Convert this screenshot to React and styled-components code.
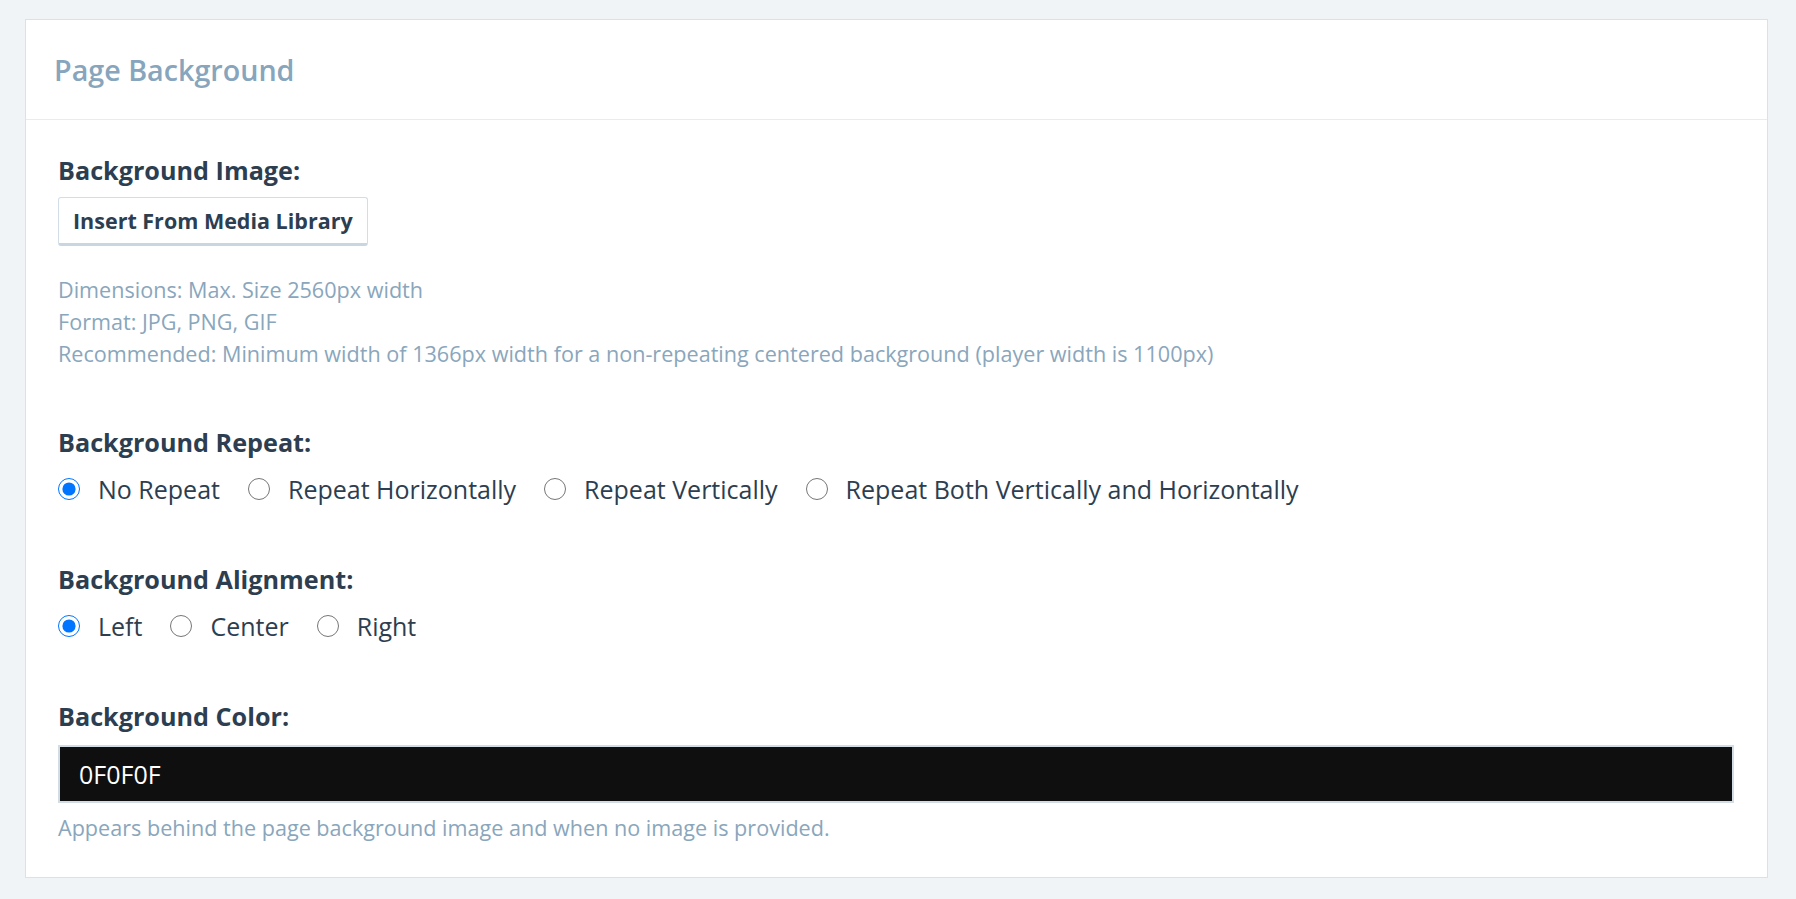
import styled, { createGlobalStyle } from 'styled-components';

const GlobalStyle = createGlobalStyle`
  body {
    margin: 0;
    background: #f1f4f7;
    font-family: "Open Sans", "Noto Sans", sans-serif;
    color: #2c3e50;
  }
`;

const Page = styled.div`
  padding: 19px 28px 21px 25px;
`;

const Card = styled.section`
  background: #fff;
  border: 1px solid #dde1e5;
`;

const CardHeader = styled.header`
  display: flex;
  align-items: center;
  height: 99px;
  padding-left: 28px;
  border-bottom: 1px solid #e8ecef;
`;

const Title = styled.h2`
  margin: 0;
  font-size: 28.7px;
  font-weight: 600;
  color: #87a5bc;
`;

const CardBody = styled.div`
  padding: 35px 33px 33px 32px;
`;

const Group = styled.div`
  margin-bottom: ${p => p.$last ? 0 : '57px'};
`;

const Label = styled.div`
  font-size: 25.2px;
  line-height: 30px;
  font-weight: 700;
  color: #2c3e50;
`;

const MediaButton = styled.button`
  margin-top: 12px;
  height: 49px;
  padding: 0 14px 0 14px;
  background: #fff;
  border: 1px solid #d3dde6;
  border-bottom: 3px solid #c9d6e2;
  border-radius: 3px;
  font-family: inherit;
  font-size: 21.5px;
  font-weight: 700;
  color: #2c3e50;
`;

const Help = styled.div`
  margin-top: ${p => p.$top || '0px'};
  font-size: 21.6px;
  line-height: 32px;
  color: #89a6bc;
`;

const RadioRow = styled.div`
  display: flex;
  align-items: center;
  gap: 28px;
  margin-top: 14px;
  height: 36px;
`;

const Option = styled.label`
  display: flex;
  align-items: center;
  gap: 18px;
  font-size: 25px;
  color: #2c3e50;
`;

const Radio = styled.input.attrs({ type: 'radio' })`
  width: 22px;
  height: 22px;
  margin: 0;
  accent-color: #0075ff;
`;

const ColorInput = styled.input`
  display: block;
  box-sizing: border-box;
  width: 100%;
  height: 58px;
  margin-top: 14px;
  padding: 0 19px;
  background: #0f0f0f;
  border: 2px solid #d2dce5;
  font-family: inherit;
  font-size: 25px;
  color: #fff;
  outline: none;
`;

function RadioGroup({ name, options, value }) {
  return (
    <RadioRow>
      {options.map(o => (
        <Option key={o}>
          <Radio name={name} defaultChecked={o === value} />
          {o}
        </Option>
      ))}
    </RadioRow>
  );
}

export default function App() {
  return (
    <>
      <GlobalStyle />
      <Page>
        <Card>
          <CardHeader>
            <Title>Page Background</Title>
          </CardHeader>
          <CardBody>
            <Group>
              <Label>Background Image:</Label>
              <MediaButton>Insert From Media Library</MediaButton>
              <Help $top="28px">
                Dimensions: Max. Size 2560px width<br />
                Format: JPG, PNG, GIF<br />
                Recommended: Minimum width of 1366px width for a non-repeating centered background (player width is 1100px)
              </Help>
            </Group>
            <Group>
              <Label>Background Repeat:</Label>
              <RadioGroup
                name="repeat"
                value="No Repeat"
                options={['No Repeat', 'Repeat Horizontally', 'Repeat Vertically', 'Repeat Both Vertically and Horizontally']}
              />
            </Group>
            <Group>
              <Label>Background Alignment:</Label>
              <RadioGroup name="align" value="Left" options={['Left', 'Center', 'Right']} />
            </Group>
            <Group $last>
              <Label>Background Color:</Label>
              <ColorInput defaultValue="0F0F0F" />
              <Help $top="9px">Appears behind the page background image and when no image is provided.</Help>
            </Group>
          </CardBody>
        </Card>
      </Page>
    </>
  );
}
